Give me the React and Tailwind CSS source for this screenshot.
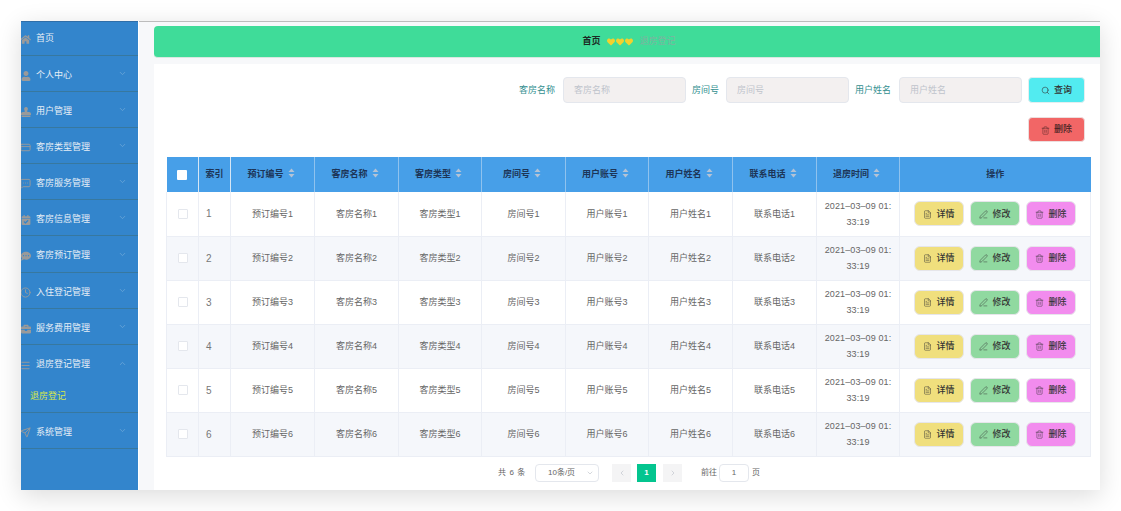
import { ChevronDown, ChevronUp, ChevronLeft, ChevronRight, Search, Trash2, PenLine, FileText, Send, Clock, Menu, CreditCard, MessageSquareMore } from 'lucide-react';
import { FaHome, FaUser, FaStamp, FaCalendarCheck, FaCommentDots, FaBriefcase, FaHeart } from 'react-icons/fa';

const font = { fontFamily: '"Liberation Sans", "Noto Sans CJK SC", sans-serif' };

const menus = [
  { name: '首页', icon: <FaHome size={11} />, arrow: false, h: 'h-[34px]' },
  { name: '个人中心', icon: <FaUser size={10} /> },
  { name: '用户管理', icon: <FaStamp size={10} /> },
  { name: '客房类型管理', icon: <CreditCard size={11} /> },
  { name: '客房服务管理', icon: <MessageSquareMore size={11} /> },
  { name: '客房信息管理', icon: <FaCalendarCheck size={10} /> },
  { name: '客房预订管理', icon: <FaCommentDots size={10} />, h: 'h-[37px]' },
  { name: '入住登记管理', icon: <Clock size={11} /> },
  { name: '服务费用管理', icon: <FaBriefcase size={10} /> },
  { name: '退房登记管理', icon: <Menu size={11} />, open: true, sub: '退房登记', h: 'h-[68px]' },
  { name: '系统管理', icon: <Send size={11} /> },
];

const headers = ['预订编号', '客房名称', '客房类型', '房间号', '用户账号', '用户姓名', '联系电话', '退房时间'];
const fields = ['预订编号', '客房名称', '客房类型', '房间号', '用户账号', '用户姓名', '联系电话'];
const rows = [1, 2, 3, 4, 5, 6];

const SortCaret = () => (
  <svg width="7" height="10" viewBox="0 0 7 10" className="ml-1 inline-block align-[-1px] text-[#b4c3d6]" fill="currentColor">
    <path d="M3.5 0.5 L6.5 4 L0.5 4 Z" />
    <path d="M3.5 9.5 L6.5 6 L0.5 6 Z" />
  </svg>
);

const SearchField = ({ label, width, gap }) => (
  <div className="flex items-center">
    <span className={`text-[9px] pt-px text-[#338f8f] ${gap}`}>{label}</span>
    <div className={`${width} h-[26px] bg-[#f3f0f0] border border-[#e4e7ed] rounded flex items-center px-2.5 pt-px text-[9px] text-[#bfc4cc]`}>
      {label}
    </div>
  </div>
);

const ActionButton = ({ icon, label, color }) => (
  <button className={`${color} w-[50px] h-[25px] rounded-md border border-[#e6e6ea] flex items-center justify-center gap-1 pt-px text-[9px] font-medium text-[#333]`}>
    {icon}
    {label}
  </button>
);

const App = () => {
  return (
    <div className="w-[1121px] h-[511px] bg-white pt-[21px] pl-[21px] overflow-hidden" style={font}>
      <div className="w-[1079px] h-[469px] flex overflow-hidden shadow-[0_6px_24px_rgba(0,0,0,0.14)]">
        {/* 侧边栏 */}
        <div className="w-[117px] shrink-0 bg-[#3385cc] border-t border-[#2f6ea8] overflow-hidden">
          {menus.map((m) => (
            <div key={m.name} className={`${m.h || 'h-9'} border-b border-[#37789f]`}>
              <div className={`${m.sub ? 'h-9' : 'h-full'} flex items-center ${m.arrow === false ? 'pt-px' : 'pt-[4px]'} text-[9px] text-[#e6eef6]`}>
                <span className="w-[15px] -ml-[3px] shrink-0 flex justify-center text-[#9a9a9a]">{m.icon}</span>
                <span className="ml-[3px] flex-1">{m.name}</span>
                {m.arrow !== false && (
                  m.open
                    ? <ChevronUp size={9} className="mr-[11px] -mt-[4px] text-[#6fa8d8]" />
                    : <ChevronDown size={9} className="mr-[11px] -mt-[4px] text-[#6fa8d8]" />
                )}
              </div>
              {m.sub && (
                <div className="h-[31px] pl-[9px] flex items-center pt-px text-[9px] text-[#d6e84a]">{m.sub}</div>
              )}
            </div>
          ))}
        </div>

        {/* 主体 */}
        <div className="flex-1 ml-px bg-[#f7f8fa] border-t border-[#bcbcbc] pt-1 pl-[15px] flex flex-col">
          <div className="h-[32px] shrink-0 bg-[#3fdc99] rounded-l border-b border-[#d9e8e0] flex items-center justify-center pl-[4px] pt-px text-[9px]">
            <span className="font-bold text-[#1c2b25]">首页</span>
            <span className="ml-[6px] mr-[7px] flex gap-px text-[#f2d22e]">
              <FaHeart size={8} />
              <FaHeart size={8} />
              <FaHeart size={8} />
            </span>
            <span className="text-[#7fb3a0]">退房登记</span>
          </div>

          <div className="mt-1.5 flex-1 bg-white pl-[12px] pr-[9px] pt-[13px]">
            <div className="flex justify-end items-center gap-[6px] pr-[6px]">
              <SearchField label="客房名称" width="w-[123px]" gap="mr-2" />
              <SearchField label="房间号" width="w-[123px]" gap="mr-[7px]" />
              <SearchField label="用户姓名" width="w-[123px]" gap="mr-2" />
              <button className="w-[57px] h-[26px] bg-[#52ebf0] rounded border border-[#e4eef0] flex items-center justify-center gap-1 pt-px text-[9px] font-medium text-[#333]">
                <Search size={9} strokeWidth={1.5} />
                查询
              </button>
            </div>
            <div className="flex justify-end mt-[14px] pr-[6px]">
              <button className="w-[57px] h-[25px] bg-[#f26666] rounded border border-[#ecdede] flex items-center justify-center gap-1 pt-px text-[9px] font-medium text-[#442222]">
                <Trash2 size={9} strokeWidth={1.25} />
                删除
              </button>
            </div>

            <table className="mt-[15px] w-[925px] table-fixed border-collapse text-[9px] text-[#666]">
              <colgroup>
                <col className="w-[32px]" />
                <col className="w-[32px]" />
                <col className="w-[84px]" />
                <col className="w-[84px]" />
                <col className="w-[83px]" />
                <col className="w-[84px]" />
                <col className="w-[83px]" />
                <col className="w-[84px]" />
                <col className="w-[84px]" />
                <col className="w-[83px]" />
                <col />
              </colgroup>
              <thead>
                <tr className="h-[35px] bg-[#479fe8] text-[#1d3557] font-bold">
                  <th className="border-r border-[#d5e6f5]">
                    <span className="block w-[10px] h-[10px] mx-auto bg-white rounded-[1px]" />
                  </th>
                  <th className="border-r border-[#d5e6f5] font-bold">索引</th>
                  {headers.map((h) => (
                    <th key={h} className="border-r border-[#8fc2ee] font-bold pr-[3px]">
                      {h}
                      <SortCaret />
                    </th>
                  ))}
                  <th className="border-l border-[#d5e6f5] font-bold">操作</th>
                </tr>
              </thead>
              <tbody>
                {rows.map((n) => (
                  <tr key={n} className={`h-[44px] border-b border-[#ebeef5] ${n % 2 === 0 ? 'bg-[#f5f7fb]' : 'bg-white'}`}>
                    <td className="border-x border-[#ebeef5]">
                      <span className="block w-[10px] h-[10px] mx-auto bg-white border border-[#e4e7ed] rounded-[1px]" />
                    </td>
                    <td className="border-r border-[#ebeef5] pl-[7px] text-[10px] text-[#777]">{n}</td>
                    {fields.map((f) => (
                      <td key={f} className="border-r border-[#ebeef5] text-center pt-px">{f}{n}</td>
                    ))}
                    <td className="border-r border-[#ebeef5] text-center leading-[16px] tracking-[0.1px]">
                      2021–03–09 01:
                      <br />
                      33:19
                    </td>
                    <td className="border-r border-[#ebeef5]">
                      <div className="flex justify-center gap-[6px]">
                        <ActionButton color="bg-[#f0df7d]" label="详情" icon={<FileText size={9} strokeWidth={1.25} />} />
                        <ActionButton color="bg-[#90d9a0]" label="修改" icon={<PenLine size={9} strokeWidth={1.25} />} />
                        <ActionButton color="bg-[#f28cee]" label="删除" icon={<Trash2 size={9} strokeWidth={1.25} />} />
                      </div>
                    </td>
                  </tr>
                ))}
              </tbody>
            </table>

            {/* 分页 */}
            <div className="mt-[7px] pl-[332px] h-[18px] flex items-center text-[8px] text-[#666]">
              <span className="w-[37px] tracking-[0.6px]">共 6 条</span>
              <div className="w-[64px] h-[18px] border border-[#e4e7ed] rounded-sm flex items-center justify-between pl-[12px] pr-[4px]">
                10条/页
                <ChevronDown size={8} className="text-[#c0c4cc]" />
              </div>
              <span className="ml-[13px] w-[19px] h-[18px] bg-[#f4f4f5] flex items-center justify-center text-[#c0c4cc]"><ChevronLeft size={8} /></span>
              <span className="ml-[6px] w-[19px] h-[18px] bg-[#04c58f] flex items-center justify-center text-white font-bold">1</span>
              <span className="ml-[7px] w-[19px] h-[18px] bg-[#f4f4f5] flex items-center justify-center text-[#c0c4cc]"><ChevronRight size={8} /></span>
              <span className="ml-[19px]">前往</span>
              <div className="ml-[2px] w-[30px] h-[18px] border border-[#e4e7ed] rounded-sm flex items-center justify-center">1</div>
              <span className="ml-[3px]">页</span>
            </div>
          </div>
        </div>
      </div>
    </div>
  );
};

export default App;
